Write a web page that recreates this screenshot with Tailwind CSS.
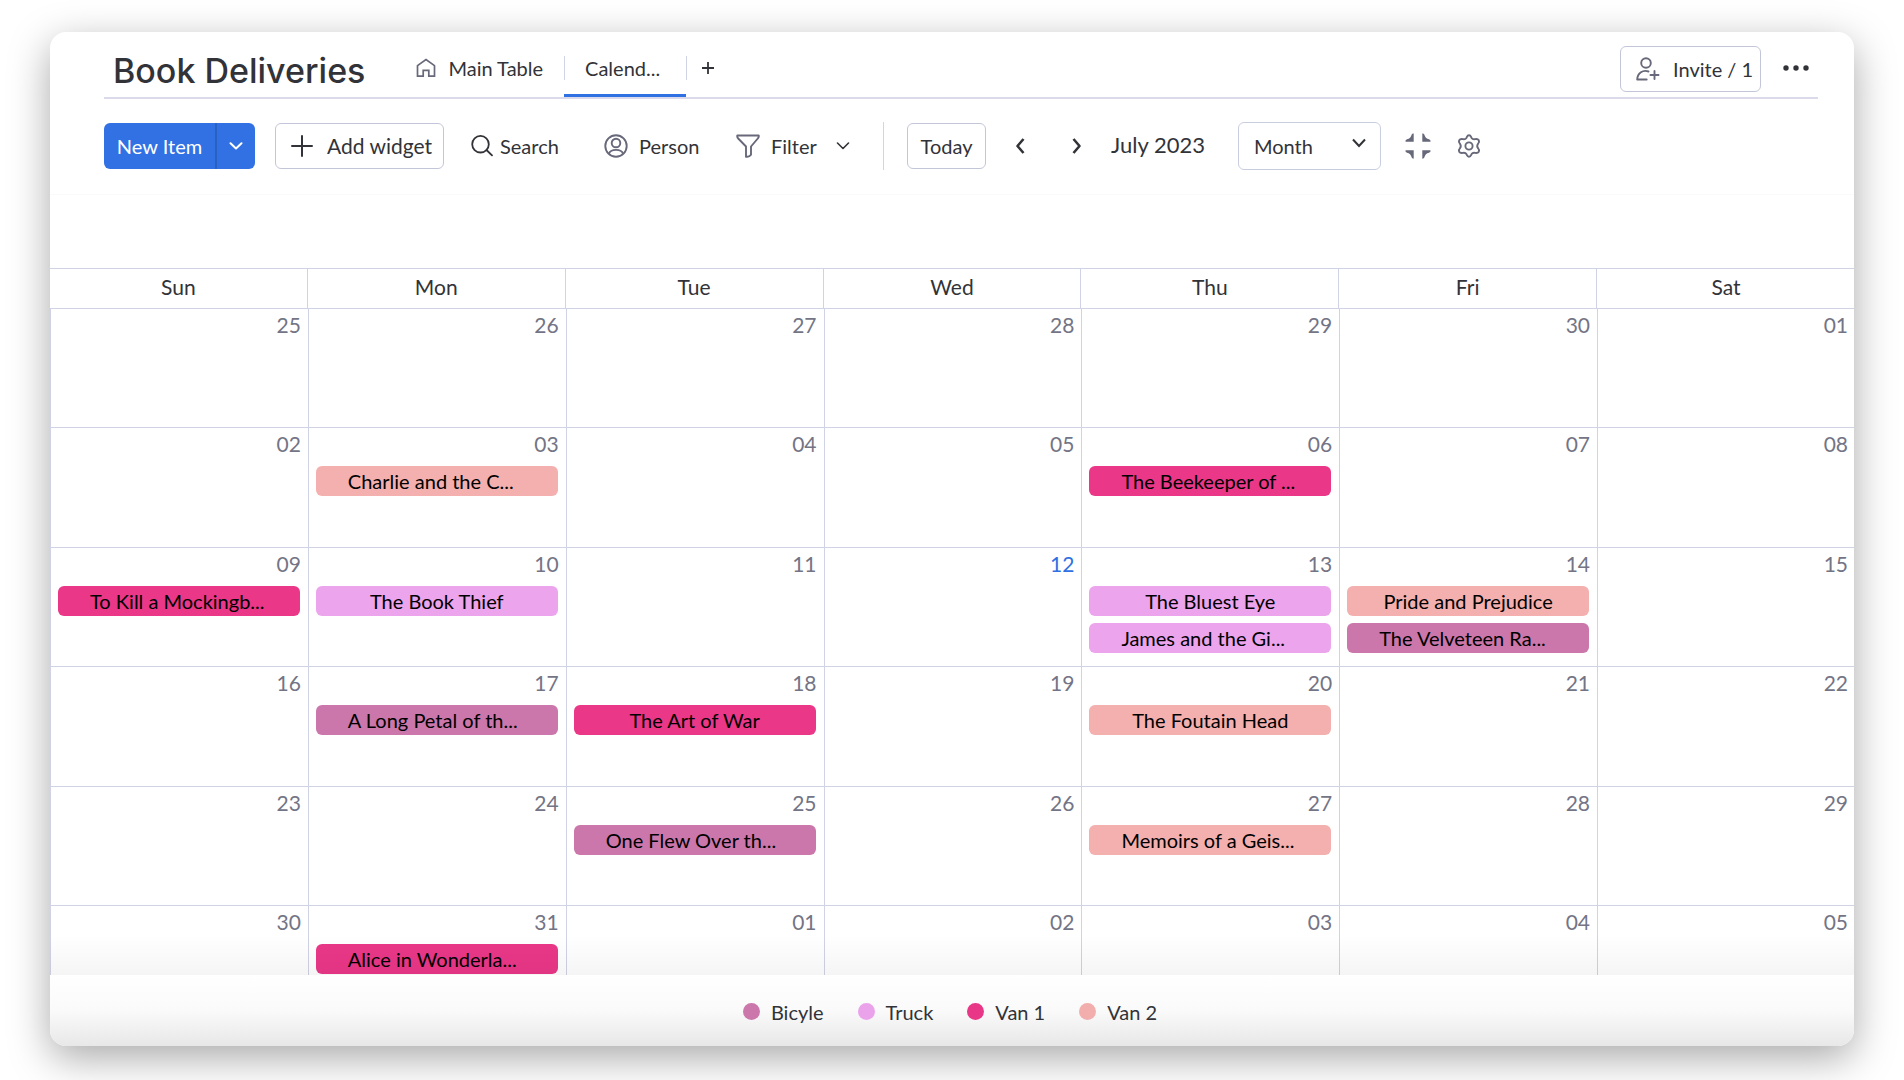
<!DOCTYPE html>
<html lang="en">
<head>
  <meta charset="UTF-8" />
  <meta name="viewport" content="width=device-width, initial-scale=1.0" />
  <title>Book Deliveries</title>
  <script src="https://cdn.jsdelivr.net/npm/@tailwindcss/browser@4"></script>
</head>
<body class="h-screen overflow-hidden bg-white px-[50px] pt-8 pb-[34px] font-['Lato',sans-serif] text-xl text-[#323338]">
  <main class="flex h-full flex-col overflow-hidden rounded-2xl bg-white shadow-[0_12px_40px_rgba(0,0,0,0.34)]">

    <!-- title and tabs -->
    <header class="mr-9 ml-[54px] flex h-[67px] shrink-0 items-stretch border-b-2 border-[#dadaea]">
      <h1 class="mr-[51px] ml-[9px] self-center pt-3 font-['Inter',sans-serif] text-[34px] leading-10 font-medium">Book Deliveries</h1>
      <nav class="flex items-stretch">
        <a href="#" class="flex items-center gap-3 pt-[6px] pr-[21px]">
          <svg class="size-5" viewBox="0 0 20 20" fill="none" stroke="#676879" stroke-width="1.700"><path d="M1.5 18.2V7.6L10 1.6l8.500 6v10.600h-5.700v-5.800H7.200v5.800z" /></svg>
          Main Table
        </a>
        <a href="#" class="relative flex w-[122px] items-center border-b-[3px] border-[#2f70e2] pt-[9px] pl-[21px]">
          <span class="absolute top-6 left-0 h-6 w-px bg-[#d0d4e4]"></span>
          Calend...
        </a>
        <button aria-label="Add view" class="relative flex items-center pt-[6px] pl-4">
          <span class="absolute top-6 left-0 h-6 w-px bg-[#d0d4e4]"></span>
          <svg class="size-3" viewBox="0 0 12 12" stroke="#323338" stroke-width="1.800"><path d="M6 0v12M0 6h12" /></svg>
        </button>
      </nav>
      <div class="ml-auto flex items-center gap-[22px] pt-2">
        <button class="flex h-[46px] w-[141px] items-center gap-[13px] rounded-md border border-[#c3c6d9] pl-[15px] whitespace-nowrap">
          <svg class="size-6 shrink-0" viewBox="0 0 24 24" fill="none" stroke="#676879" stroke-width="1.900" stroke-linecap="round" stroke-linejoin="round"><circle cx="10" cy="6" r="4.800" /><path d="M12.500 14.500C7 12.500 1.500 16 1.200 22.500h9.500M18.500 14v8M14.500 18h8" /></svg>
          Invite / 1
        </button>
        <button aria-label="More" class="mr-[9px]">
          <svg class="h-6 w-[26px]" viewBox="0 0 26 24" fill="#323338"><circle cx="3" cy="11" r="2.700" /><circle cx="13" cy="11" r="2.700" /><circle cx="23" cy="11" r="2.700" /></svg>
        </button>
      </div>
    </header>

    <!-- toolbar -->
    <div class="flex h-24 shrink-0 items-center border-b border-[#fafafa] pb-[2px] pl-[54px]">
      <div class="flex h-[46px] overflow-hidden rounded-md bg-[#3271e3] text-white">
        <button class="w-[113px] border-r-2 border-[#2a62c4]">New Item</button>
        <button aria-label="More item types" class="flex w-[38px] items-center justify-center">
          <svg class="h-2 w-[14px]" viewBox="0 0 14 8" fill="none" stroke="white" stroke-width="2" stroke-linecap="round" stroke-linejoin="round"><path d="M1.500 1.200 7 6.500l5.500-5.300" /></svg>
        </button>
      </div>
      <button class="ml-5 flex h-[46px] w-[169px] items-center gap-[14px] rounded-md border border-[#c3c6d9] pl-[15px] text-[21px] whitespace-nowrap">
        <svg class="size-[22px] shrink-0" viewBox="0 0 22 22" stroke="#323338" stroke-width="2" stroke-linecap="round"><path d="M11 1v20M1 11h20" /></svg>
        Add widget
      </button>
      <button class="ml-[27px] flex w-[92px] items-center gap-[7px]">
        <svg class="size-[22px] shrink-0" viewBox="0 0 22 22" fill="none" stroke="#323338" stroke-width="1.800" stroke-linecap="round"><circle cx="9.500" cy="9.200" r="8.300" /><path d="m15.500 15 5.500 5.300" /></svg>
        Search
      </button>
      <button class="ml-[41px] flex w-24 items-center gap-[11px]">
        <svg class="size-6 shrink-0" viewBox="0 0 24 24" fill="none" stroke="#676879" stroke-width="1.900"><circle cx="12" cy="12" r="10.700" /><circle cx="12" cy="9" r="4.300" /><path d="M5 19.800c1.500-5.200 12.500-5.200 14 0" /></svg>
        Person
      </button>
      <button class="ml-9 flex w-[114px] items-center gap-[11px]">
        <svg class="size-6" viewBox="0 0 24 24" fill="none" stroke="#676879" stroke-width="1.900" stroke-linejoin="round"><path d="M1.300 1.500h21.400c.3 1.200-.2 2.300-.9 3L15 12.500v8.300c-1 1.500-3 2.200-5 1.900v-10.200L2.200 4.500c-.7-.7-1.200-1.800-.9-3z" /></svg>
        Filter
        <svg class="ml-auto h-2 w-[14px]" viewBox="0 0 14 8" fill="none" stroke="#323338" stroke-width="1.600" stroke-linecap="round" stroke-linejoin="round"><path d="M1.500 1 7 6.500 12.500 1" /></svg>
      </button>
      <div class="ml-[33px] h-12 w-px bg-[#d0d4e4]"></div>
      <button class="ml-[23px] h-[46px] w-[79px] rounded-md border border-[#c3c6d9]">Today</button>
      <button aria-label="Previous month" class="ml-[29px]">
        <svg class="h-4 w-[10px]" viewBox="0 0 10 16" fill="none" stroke="#323338" stroke-width="2.600" stroke-linejoin="round"><path d="M8.500 1 2.500 8l6 7" /></svg>
      </button>
      <button aria-label="Next month" class="ml-[47px]">
        <svg class="h-4 w-[10px]" viewBox="0 0 10 16" fill="none" stroke="#323338" stroke-width="2.600" stroke-linejoin="round"><path d="m1.500 1 6 7-6 7" /></svg>
      </button>
      <span class="ml-[29px] w-[98px] text-[22px] whitespace-nowrap">July 2023</span>
      <div class="relative ml-[29px]">
        <select aria-label="View range" class="h-12 w-[143px] appearance-none rounded-md border border-[#c9cde0] bg-white pl-[15px]">
          <option>Month</option>
          <option>Week</option>
          <option>Day</option>
        </select>
        <svg class="pointer-events-none absolute top-4 right-[15px] h-[10px] w-[14px]" viewBox="0 0 14 10" fill="none" stroke="#323338" stroke-width="2"><path d="M1 1.500 7 8l6-6.500" /></svg>
      </div>
      <button aria-label="Collapse" class="ml-6">
        <svg class="size-[26px]" viewBox="0 0 26 26" fill="#676879"><path d="M8.700.5v8.200H.5Q0 7 2 6.300 5.700 5.500 6.700 1.500 7.500 0 8.700.5zM17.300.5v8.200h8.200Q26 7 24 6.300 20.300 5.500 19.300 1.500 18.500 0 17.300.5zM8.700 25.500v-8.200H.5Q0 19 2 19.700 5.700 20.500 6.700 24.500 7.500 26 8.700 25.500zM17.300 25.500v-8.200h8.200Q26 19 24 19.700 20.300 20.500 19.300 24.500 18.500 26 17.300 25.500z" /></svg>
      </button>
      <button aria-label="Settings" class="ml-[26px]">
        <svg class="size-6" viewBox="0 0 24 24" fill="none" stroke="#676879" stroke-width="1.900" stroke-linejoin="round"><path d="M12 1.200c1.700 0 1.900 1.400 2.600 2.700.8 1.300 2 1.500 3.500 1.200 1.700-.3 2.900-.2 3.700 1.100.8 1.500.2 2.500-.8 3.600-1 1.400-1 3 0 4.400 1 1.100 1.600 2.100.8 3.600-.8 1.300-2 1.400-3.700 1.100-1.500-.3-2.700-.1-3.500 1.200-.7 1.300-.9 2.700-2.600 2.700s-1.900-1.400-2.600-2.700c-.8-1.300-2-1.500-3.500-1.200-1.700.3-2.900.2-3.700-1.100-.8-1.500-.2-2.500.8-3.600 1-1.400 1-3 0-4.400-1-1.100-1.600-2.100-.8-3.600.8-1.300 2-1.400 3.700-1.100 1.500.3 2.700.1 3.500-1.200.7-1.300.9-2.700 2.600-2.700z" /><circle cx="12" cy="12" r="3.600" /></svg>
      </button>
    </div>

    <!-- month grid -->
    <div class="relative mt-[73px] min-h-0 flex-1 overflow-hidden">
      <table class="w-[calc(100%+1px)] table-fixed border-separate border-spacing-0">
        <thead>
          <tr id="weekdays"></tr>
        </thead>
        <tbody id="weeks"></tbody>
      </table>
      <div class="pointer-events-none absolute inset-x-0 bottom-0 h-10 bg-linear-to-b from-transparent to-black/4"></div>
    </div>

    <!-- legend -->
    <ul class="flex h-[71px] shrink-0 items-center justify-center gap-[34px] bg-linear-to-b from-white via-[#fafafa] to-[#e8e8e8] pt-[2px] pr-1">
      <li class="flex items-center gap-[11px]"><span class="size-[17px] rounded-full bg-[#cb77ab]"></span>Bicyle</li>
      <li class="flex items-center gap-[11px]"><span class="size-[17px] rounded-full bg-[#eaa3eb]"></span>Truck</li>
      <li class="flex items-center gap-[11px]"><span class="size-[17px] rounded-full bg-[#e93788]"></span>Van 1</li>
      <li class="flex items-center gap-[11px]"><span class="size-[17px] rounded-full bg-[#f1aeac]"></span>Van 2</li>
    </ul>
  </main>

  <script>
    const colors = {
      bicycle: "bg-[#cb77ab]",
      truck: "bg-[#eca4ed]",
      van1: "bg-[#ea3788]",
      van2: "bg-[#f3b0ae]"
    };

    // keyed by cell index, counted from Sunday 25 June
    const events = {
      8: [["Charlie and the C...", "van2"]],
      11: [["The Beekeeper of ...", "van1"]],
      14: [["To Kill a Mockingb...", "van1"]],
      15: [["The Book Thief", "truck"]],
      18: [["The Bluest Eye", "truck"], ["James and the Gi...", "truck"]],
      19: [["Pride and Prejudice", "van2"], ["The Velveteen Ra...", "bicycle"]],
      22: [["A Long Petal of th...", "bicycle"]],
      23: [["The Art of War", "van1"]],
      25: [["The Foutain Head", "van2"]],
      30: [["One Flew Over th...", "bicycle"]],
      32: [["Memoirs of a Geis...", "van2"]],
      36: [["Alice in Wonderla...", "van1"]]
    };

    document.getElementById("weekdays").innerHTML = ["Sun", "Mon", "Tue", "Wed", "Thu", "Fri", "Sat"]
      .map(d => `<th class="h-[41px] border-y border-r border-[#d0d2e5] p-0 pb-1 text-[21px] leading-7 font-normal last:border-r-0">${d}</th>`)
      .join("");

    let html = "";
    for (let w = 0; w < 6; w++) {
      html += `<tr class="odd:h-[119px] even:h-[120px]">`;
      for (let d = 0; d < 7; d++) {
        const i = w * 7 + d;
        const date = new Date(2023, 5, 25 + i);
        const label = String(date.getDate()).padStart(2, "0");
        const today = date.getMonth() === 6 && date.getDate() === 12;
        const items = (events[i] || []).map(([name, kind]) => {
          const align = name.endsWith("...") ? "text-left" : "text-center";
          return `<button class="block h-[30px] w-full overflow-hidden rounded-md px-8 whitespace-nowrap text-black ${align} ${colors[kind]}">${name}</button>`;
        }).join("");
        html += `<td class="border-b border-l border-[#d0d2e5] p-0 align-top">
          <div class="h-[38px] pt-0.5 pr-[7px] text-right text-[21px] leading-7 ${today ? "text-[#2f70e2]" : "text-[#737485]"}">${label}</div>
          <div class="flex flex-col gap-[7px] pr-2 pl-[7px]">${items}</div>
        </td>`;
      }
      html += "</tr>";
    }
    document.getElementById("weeks").innerHTML = html;
  </script>
</body>
</html>
